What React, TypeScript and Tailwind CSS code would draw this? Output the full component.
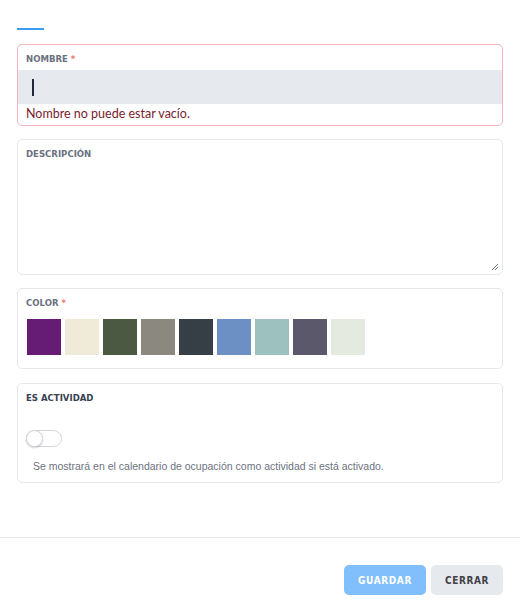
import React from "react";

const swatches = ["#661c75", "#f0ead8", "#4b5842", "#8b8880", "#363e46", "#6c90c4", "#9cc1be", "#5c586c", "#e5eae0"];

export default function App() {
  return (
    <div className="w-[520px] h-[614px] bg-white flex flex-col font-['Lato',sans-serif]">
      <div className="px-[17px] pt-[28px] flex flex-col">
        <div className="w-[27px] h-[2px] bg-[#3d9bf0]" />
        <div className="mt-[14px] border border-[#f4b4bb] rounded-[5px] flex flex-col">
          <div className="px-[8px] pt-[8px] h-[25px] text-[9.5px] leading-[12px] font-bold text-[#6b7280] font-['DejaVu_Sans_Condensed',sans-serif]">
            NOMBRE <span className="text-[#f87171]">*</span>
          </div>
          <div className="h-[34px] bg-[#e6e9ee] flex items-center pl-[14px]">
            <div className="w-[1.5px] h-[17px] bg-[#1f2937]" />
          </div>
          <div className="px-[8px] h-[21px] flex items-center text-[12.5px] text-[#7a1c30]">
            Nombre no puede estar vacío.
          </div>
        </div>

        <div className="mt-[13px] border border-[#e5e7eb] rounded-[5px] h-[136px] relative">
          <div className="px-[8px] pt-[8px] text-[9.5px] leading-[12px] font-bold text-[#6b7280] font-['DejaVu_Sans_Condensed',sans-serif]">
            DESCRIPCIÓN
          </div>
          <svg className="absolute right-[3px] bottom-[3px]" width="8" height="8" viewBox="0 0 8 8">
            <path d="M7 1L1 7M7 4L4 7" stroke="#6b7280" strokeWidth="1" />
          </svg>
        </div>

        <div className="mt-[13px] border border-[#e5e7eb] rounded-[5px] h-[81px] flex flex-col">
          <div className="px-[8px] pt-[8px] h-[30px] text-[9.5px] leading-[12px] font-bold text-[#6b7280] font-['DejaVu_Sans_Condensed',sans-serif]">
            COLOR <span className="text-[#f87171]">*</span>
          </div>
          <div className="flex gap-[4px] pl-[9px]">
            {swatches.map((c) => (
              <div key={c} className="w-[34px] h-[36px]" style={{ backgroundColor: c }} />
            ))}
          </div>
        </div>

        <div className="mt-[14px] border border-[#e5e7eb] rounded-[5px] h-[100px] flex flex-col">
          <div className="px-[8px] pt-[8px] h-[46px] text-[9.5px] leading-[12px] font-bold text-[#374151] font-['DejaVu_Sans_Condensed',sans-serif]">
            ES ACTIVIDAD
          </div>
          <div className="pl-[8px]">
            <div className="w-[36px] h-[17px] rounded-full border border-[#d1d5db] bg-white relative">
              <div className="absolute left-[-1px] top-[-1px] w-[17px] h-[17px] rounded-full bg-white border border-[#d1d5db] shadow-[0_1px_2px_rgba(0,0,0,0.2)]" />
            </div>
          </div>
          <div className="pl-[15px] mt-[12px] text-[10.5px] text-[#6b7280] font-['Liberation_Sans',sans-serif]">
            Se mostrará en el calendario de ocupación como actividad si está activado.
          </div>
        </div>
      </div>

      <div className="mt-[54px] border-t border-[#e5e7eb]" />
      <div className="flex justify-end gap-[5px] pr-[17px] pt-[27px]">
        <button className="w-[82px] h-[30px] rounded-[5px] bg-[#80bffc] text-white text-[10px] font-bold tracking-[0.6px] font-['DejaVu_Sans_Condensed',sans-serif]">
          GUARDAR
        </button>
        <button className="w-[72px] h-[30px] rounded-[5px] bg-[#e6e9ee] text-[#3f3f46] text-[10px] font-bold tracking-[0.6px] font-['DejaVu_Sans_Condensed',sans-serif]">
          CERRAR
        </button>
      </div>
    </div>
  );
}
